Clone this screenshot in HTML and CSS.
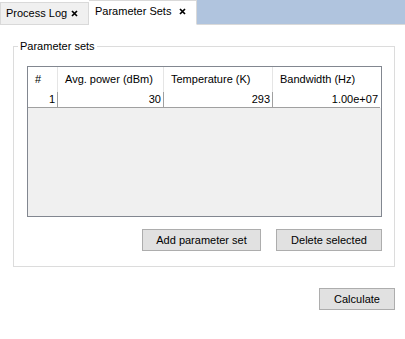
FILE: index.html
```html
<!DOCTYPE html>
<html>
<head>
<meta charset="utf-8">
<link rel="stylesheet" href="styles.css">
</head>
<body>
<div class="tabbar">
  <div class="tab">
    <span class="tab-label">Process Log</span>
    <svg class="close" width="7" height="7" viewBox="0 0 7 7"><path d="M1 1L6 6M6 1L1 6" stroke="#000" stroke-width="1.7" fill="none"/></svg>
  </div>
  <div class="tab active">
    <span class="tab-label">Parameter Sets</span>
    <svg class="close" width="7" height="7" viewBox="0 0 7 7"><path d="M1 1L6 6M6 1L1 6" stroke="#000" stroke-width="1.7" fill="none"/></svg>
  </div>
  <div class="tab-fill"></div>
</div>
<div class="page">
  <fieldset class="group">
    <legend class="group-title">Parameter sets</legend>
    <div class="table">
      <div class="row head">
        <div class="cell">#</div>
        <div class="cell">Avg. power (dBm)</div>
        <div class="cell">Temperature (K)</div>
        <div class="cell last">Bandwidth (Hz)</div>
      </div>
      <div class="row data">
        <div class="cell">1</div>
        <div class="cell">30</div>
        <div class="cell">293</div>
        <div class="cell last">1.00e+07</div>
      </div>
    </div>
    <div class="group-buttons">
      <button class="btn btn-add">Add parameter set</button>
      <button class="btn btn-del">Delete selected</button>
    </div>
  </fieldset>
  <div class="bottom-bar">
    <button class="btn btn-calc">Calculate</button>
  </div>
</div>
</body>
</html>
```

FILE: styles.css
```css
html, body {
  margin: 0;
  padding: 0;
  background: #ffffff;
}
body {
  font-family: "Liberation Sans", Arial, sans-serif;
  font-size: 11px;
  color: #000;
  width: 405px;
  height: 339px;
  overflow: hidden;
}
.tabbar {
  display: flex;
  height: 25px;
}
.tab {
  box-sizing: border-box;
  width: 89px;
  margin-top: 2px;
  height: 23px;
  background: #f0f0f0;
  border: 1px solid #d9d9d9;
  display: flex;
  align-items: center;
  padding: 0 10px 0 5px;
}
.tab.active {
  width: 108px;
  margin-top: 0;
  height: 25px;
  background: #fff;
  border-bottom-color: #fff;
  border-left: none;
  padding-left: 6px;
  padding-bottom: 2px;
}
.tab-label {
  flex: 1;
  line-height: 13px;
}
.close {
  display: block;
}
.tab-fill {
  flex: 1;
  background: #b0c4de;
  border-bottom: 1px solid #d9d9d9;
}
.page {
  padding: 15px 10px 0 13px;
}
.group {
  margin: 0;
  padding: 0 12px 15px 13px;
  border: 1px solid #dcdcdc;
  min-width: 0;
}
.group-title {
  margin-left: -9px;
  padding: 0 2px;
  line-height: 13px;
}
.table {
  margin-top: 13px;
  height: 151px;
  box-sizing: border-box;
  border: 1px solid #828790;
  background: #f0f0f0;
}
.row {
  display: grid;
  grid-template-columns: 30px 106px 109px 107px;
  background: #fff;
}
.cell {
  box-sizing: border-box;
  white-space: nowrap;
  overflow: hidden;
}
.head .cell {
  height: 25px;
  line-height: 25px;
  padding-left: 7px;
  border-right: 1px solid #e5e5e5;
}
.head .cell.last {
  border-right: none;
}
.data .cell {
  height: 16px;
  line-height: 15px;
  text-align: right;
  padding-right: 2px;
  border-right: 1px solid #a0a0a0;
  border-bottom: 1px solid #a0a0a0;
}
.data .cell.last {
  border-right: none;
}
.group-buttons {
  display: flex;
  justify-content: flex-end;
  gap: 15px;
  margin-top: 12px;
}
.btn {
  font-family: inherit;
  font-size: 11px;
  color: #000;
  background: #e1e1e1;
  border: 1px solid #adadad;
  border-radius: 0;
  height: 22px;
  padding: 0;
  margin: 0;
  line-height: 20px;
}
.btn-add { width: 119px; }
.btn-del { width: 106px; }
.bottom-bar {
  display: flex;
  justify-content: flex-end;
  padding-top: 21px;
  padding-right: 0;
}
.btn-calc { width: 76px; }
```
